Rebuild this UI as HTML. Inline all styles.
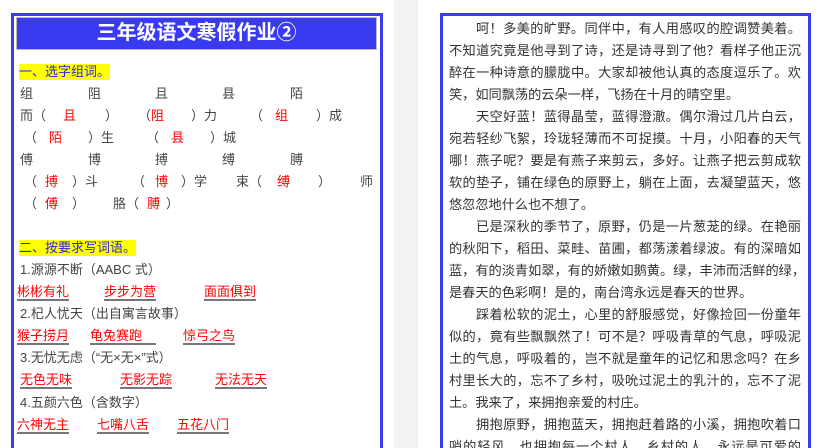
<!DOCTYPE html>
<html><head><meta charset="utf-8"><style>
html,body{margin:0;width:823px;height:448px;overflow:hidden}
body{background:#fff;font-family:"Liberation Sans","Noto Sans CJK SC",sans-serif;position:relative}
.gap{position:absolute;left:394px;top:0;width:24px;height:448px;background:#f3f3f5}
.page{position:absolute;top:13px;border:3px solid #3a3af0;border-bottom:none;height:435px;box-sizing:border-box}
.t{position:absolute;font-size:13px;color:#444;white-space:nowrap;line-height:16px}
.r{color:#f00}
.h{background:#ff0;color:#2a2ad8}
.u{color:#f00;border-bottom:2px solid #777;line-height:14px}
.right{position:absolute;left:449px;top:17px;width:352px;height:431px;overflow:hidden}
.right div{font-size:13.2px;line-height:22px;height:22px;color:#333;white-space:nowrap;text-align:justify;text-align-last:justify;font-family:"Noto Sans CJK SC",sans-serif;overflow:hidden}
.right .i{padding-left:27px}
.right .l{text-align-last:left}
</style></head><body>
<div class="gap"></div>
<div class="page" style="left:11px;width:372px"></div>
<div style="position:absolute;left:16px;top:17px;width:361px;height:33px;background:#3a3af0;border:1px solid #bbb;box-sizing:border-box;color:#fff;font-weight:bold;font-size:20px;line-height:31px;text-align:center">三年级语文寒假作业②</div>
<div class="t h" style="left:19px;top:64px">一、选字组词。</div>
<div class="t" style="left:20px;top:86px">组</div><div class="t" style="left:88px;top:86px">阻</div><div class="t" style="left:155px;top:86px">且</div><div class="t" style="left:222px;top:86px">县</div><div class="t" style="left:290px;top:86px">陌</div>
<div class="t" style="left:20px;top:108px">而（</div><div class="t r" style="left:63px;top:108px">且</div><div class="t" style="left:105px;top:108px">）</div><div class="t" style="left:138px;top:108px">（<span class="r">阻</span></div><div class="t" style="left:191px;top:108px">）力</div><div class="t" style="left:250px;top:108px">（</div><div class="t r" style="left:275px;top:108px">组</div><div class="t" style="left:316px;top:108px">）成</div>
<div class="t" style="left:24px;top:130px">（</div><div class="t r" style="left:49px;top:130px">陌</div><div class="t" style="left:88px;top:130px">）生</div><div class="t" style="left:146px;top:130px">（</div><div class="t r" style="left:171px;top:130px">县</div><div class="t" style="left:210px;top:130px">）城</div>
<div class="t" style="left:20px;top:152px">傅</div><div class="t" style="left:88px;top:152px">博</div><div class="t" style="left:155px;top:152px">搏</div><div class="t" style="left:222px;top:152px">缚</div><div class="t" style="left:290px;top:152px">膊</div>
<div class="t" style="left:24px;top:174px">（</div><div class="t r" style="left:45px;top:174px">搏</div><div class="t" style="left:72px;top:174px">）斗</div><div class="t" style="left:132px;top:174px">（</div><div class="t r" style="left:155px;top:174px">博</div><div class="t" style="left:181px;top:174px">）学</div><div class="t" style="left:236px;top:174px">束（</div><div class="t r" style="left:277px;top:174px">缚</div><div class="t" style="left:318px;top:174px">）</div><div class="t" style="left:360px;top:174px">师</div>
<div class="t" style="left:24px;top:196px">（</div><div class="t r" style="left:45px;top:196px">傅</div><div class="t" style="left:72px;top:196px">）</div><div class="t" style="left:113px;top:196px">胳（</div><div class="t r" style="left:147px;top:196px">膊</div><div class="t" style="left:166px;top:196px">）</div>
<div class="t h" style="left:19px;top:240px">二、按要求写词语。</div>
<div class="t" style="left:20px;top:262px">1.源源不断（AABC 式）</div>
<div class="t u" style="left:17px;top:285px">彬彬有礼</div><div class="t u" style="left:104px;top:285px">步步为营</div><div class="t u" style="left:204px;top:285px">面面俱到</div>
<div class="t" style="left:20px;top:306px">2.杞人忧天（出自寓言故事）</div>
<div class="t u" style="left:17px;top:329px">猴子捞月</div><div class="t u" style="left:90px;top:329px;padding-right:14px">龟兔赛跑</div><div class="t u" style="left:183px;top:329px">惊弓之鸟</div>
<div class="t" style="left:20px;top:350px">3.无忧无虑（“无×无×”式）</div>
<div class="t u" style="left:20px;top:373px">无色无味</div><div class="t u" style="left:120px;top:373px">无影无踪</div><div class="t u" style="left:215px;top:373px">无法无天</div>
<div class="t" style="left:20px;top:395px">4.五颜六色（含数字）</div>
<div class="t u" style="left:17px;top:418px">六神无主</div><div class="t u" style="left:97px;top:418px">七嘴八舌</div><div class="t u" style="left:177px;top:418px">五花八门</div>
<div class="page" style="left:440px;width:371px"></div>
<div class="right">
<div class="i">呵！多美的旷野。同伴中，有人用感叹的腔调赞美着。</div>
<div>不知道究竟是他寻到了诗，还是诗寻到了他？看样子他正沉</div>
<div>醉在一种诗意的朦胧中。大家却被他认真的态度逗乐了。欢</div>
<div class="l">笑，如同飘荡的云朵一样，飞扬在十月的晴空里。</div>
<div class="i">天空好蓝！蓝得晶莹，蓝得澄澈。偶尔滑过几片白云，</div>
<div>宛若轻纱飞絮，玲珑轻薄而不可捉摸。十月，小阳春的天气</div>
<div>哪！燕子呢？要是有燕子来剪云，多好。让燕子把云剪成软</div>
<div>软的垫子，铺在绿色的原野上，躺在上面，去凝望蓝天，悠</div>
<div class="l">悠忽忽地什么也不想了。</div>
<div class="i">已是深秋的季节了，原野，仍是一片葱茏的绿。在艳丽</div>
<div>的秋阳下，稻田、菜畦、苗圃，都荡漾着绿波。有的深暗如</div>
<div>蓝，有的淡青如翠，有的娇嫩如鹅黄。绿，丰沛而活鲜的绿，</div>
<div class="l">是春天的色彩啊！是的，南台湾永远是春天的世界。</div>
<div class="i">踩着松软的泥土，心里的舒服感觉，好像捡回一份童年</div>
<div>似的，竟有些飘飘然了！可不是？呼吸青草的气息，呼吸泥</div>
<div>土的气息，呼吸着的，岂不就是童年的记忆和思念吗？在乡</div>
<div>村里长大的，忘不了乡村，吸吮过泥土的乳汁的，忘不了泥</div>
<div class="l">土。我来了，来拥抱亲爱的村庄。</div>
<div class="i">拥抱原野，拥抱蓝天，拥抱赶着路的小溪，拥抱吹着口</div>
<div>哨的轻风，也拥抱每一个村人，乡村的人，永远是可爱的</div>
</div>
</body></html>
